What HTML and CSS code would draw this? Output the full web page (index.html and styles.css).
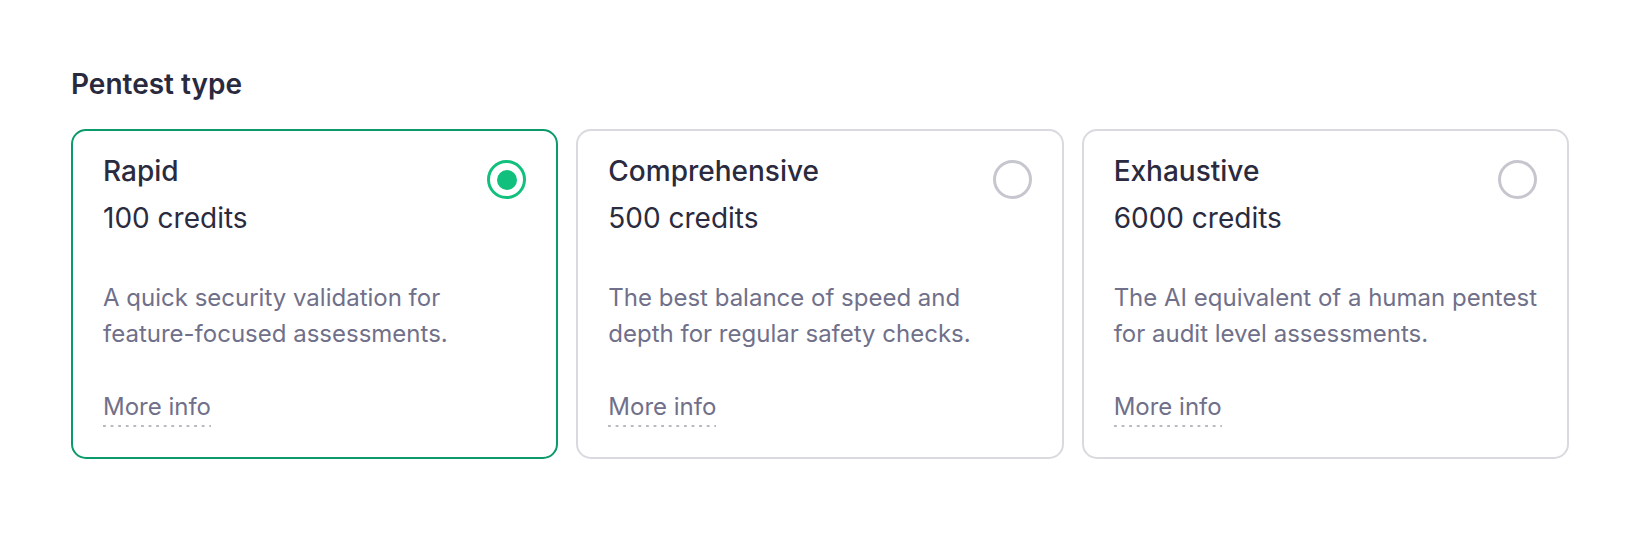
FILE: index.html
```html
<!DOCTYPE html>
<html lang="en">
<head>
<meta charset="utf-8">
<title>Pentest type</title>
<link rel="stylesheet" href="styles.css">
</head>
<body>
<section class="field">
  <h2 class="field-label">Pentest type</h2>
  <div class="options">
    <label class="option option-selected">
      <div class="option-head">
        <span class="option-name">Rapid</span>
        <span class="radio radio-on"><span class="radio-dot"></span></span>
      </div>
      <div class="option-credits">100 credits</div>
      <p class="option-desc">A quick security validation for<br>feature-focused assessments.</p>
      <div class="option-more"><span class="more-link">More info</span></div>
    </label>
    <label class="option">
      <div class="option-head">
        <span class="option-name">Comprehensive</span>
        <span class="radio"></span>
      </div>
      <div class="option-credits">500 credits</div>
      <p class="option-desc">The best balance of speed and<br>depth for regular safety checks.</p>
      <div class="option-more"><span class="more-link">More info</span></div>
    </label>
    <label class="option">
      <div class="option-head">
        <span class="option-name">Exhaustive</span>
        <span class="radio"></span>
      </div>
      <div class="option-credits">6000 credits</div>
      <p class="option-desc">The AI equivalent of a human pentest<br>for audit level assessments.</p>
      <div class="option-more"><span class="more-link">More info</span></div>
    </label>
  </div>
</section>
</body>
</html>
```
FILE: styles.css
```css
* { box-sizing: border-box; }
html, body { margin: 0; padding: 0; background: #ffffff; }
body {
  font-family: Inter, "Noto Sans", "Liberation Sans", sans-serif;
  color: #2b2b40;
}
.field {
  padding: 64px 0 0 71px;
  width: 1569px;
}
.field-label {
  margin: 0 0 25px 0;
  font-size: 28px;
  line-height: 40px;
  font-weight: 600;
  color: #2a2a3f;
}
.options {
  display: grid;
  grid-template-columns: repeat(3, 1fr);
  column-gap: 18px;
}
.option {
  display: flex;
  flex-direction: column;
  border: 2px solid #d9d9df;
  border-radius: 15px;
  padding: 20px 30px 30px 30px;
  background: #fff;
  cursor: pointer;
}
.option-selected { border-color: #0b9a6a; }
.option-head {
  display: flex;
  justify-content: space-between;
  align-items: flex-start;
  height: 40px;
}
.option-name {
  font-size: 28px;
  line-height: 40px;
  font-weight: 500;
  color: #2b2b40;
}
.radio {
  flex: none;
  width: 39px;
  height: 39px;
  margin-top: 9px;
  border-radius: 50%;
  border: 3px solid #c6c6ce;
  display: flex;
  align-items: center;
  justify-content: center;
}
.radio-on { border: 3.5px solid #12c07e; }
.radio-dot {
  width: 20px;
  height: 20px;
  border-radius: 50%;
  background: #12c07e;
}
.option-credits {
  margin-top: 7px;
  font-size: 28px;
  line-height: 40px;
  font-weight: 400;
  color: #2b2b40;
}
.option-desc {
  margin: 42px 0 0 0;
  font-size: 24px;
  line-height: 36px;
  color: #70708a;
  white-space: nowrap;
}
.option-more {
  margin-top: 37px;
}
.more-link {
  display: inline-block;
  font-size: 24px;
  line-height: 36px;
  color: #70708a;
  padding-bottom: 2px;
  background-image: linear-gradient(to right, #b9b9c2 0 2.4px, transparent 2.4px);
  background-size: 7.6px 2px;
  background-repeat: repeat-x;
  background-position: 0 100%;
}
```
